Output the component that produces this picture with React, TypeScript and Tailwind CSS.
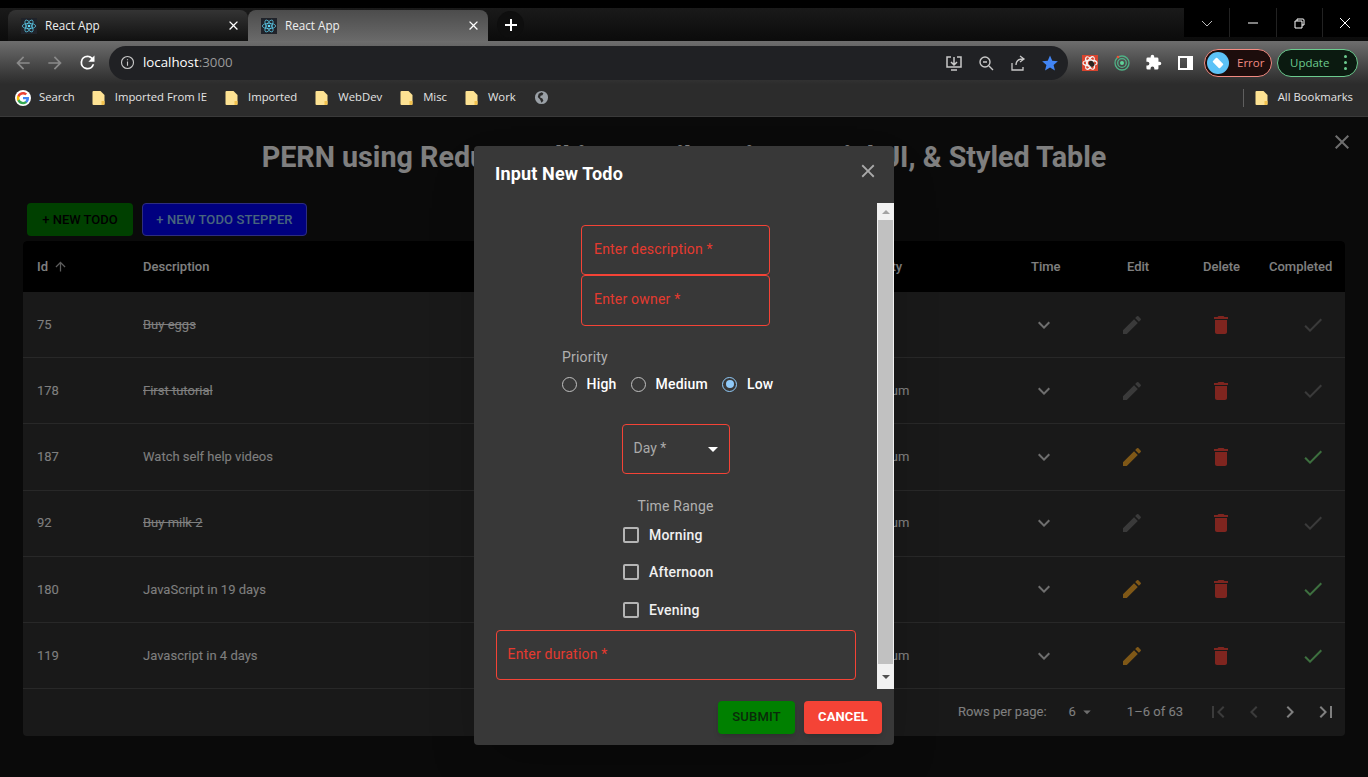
import React from "react";

const P = {
  edit: "M3 17.25V21h3.75L17.81 9.94l-3.75-3.75L3 17.25zM20.71 7.04c.39-.39.39-1.02 0-1.41l-2.34-2.34a.9959.9959 0 0 0-1.41 0l-1.83 1.83 3.75 3.75 1.83-1.83z",
  del: "M6 19c0 1.1.9 2 2 2h8c1.1 0 2-.9 2-2V7H6v12zM19 4h-3.5l-1-1h-5l-1 1H5v2h14V4z",
  check: "M9 16.17 4.83 12l-1.42 1.41L9 19 21 7l-1.41-1.41z",
  more: "M16.59 8.59 12 13.17 7.41 8.59 6 10l6 6 6-6z",
  first: "M18.41 16.59 13.82 12l4.59-4.59L17 6l-6 6 6 6zM6 6h2v12H6z",
  last: "M5.59 7.41 10.18 12l-4.59 4.59L7 18l6-6-6-6zM16 6h2v12h-2z",
  left: "M15.41 16.59 10.83 12l4.58-4.59L14 6l-6 6 6 6z",
  right: "M8.59 16.59 13.17 12 8.59 7.41 10 6l6 6-6 6z",
  drop: "M7 10l5 5 5-5z",
  up: "M4 12l1.41 1.41L11 7.83V20h2V7.83l5.58 5.59L20 12l-8-8-8 8z",
  close: "M19 6.41 17.59 5 12 10.59 6.41 5 5 6.41 10.59 12 5 17.59 6.41 19 12 13.41 17.59 19 19 17.59 13.41 12z",
};

function I({ d, className }: { d: string; className?: string }) {
  return (
    <svg viewBox="0 0 24 24" fill="currentColor" className={className}>
      <path d={d} />
    </svg>
  );
}

function ReactLogo() {
  return (
    <span className="w-4 h-4 bg-[#20232a] flex items-center justify-center shrink-0">
      <svg viewBox="-12 -12 24 24" className="w-4 h-4" fill="none" stroke="#61dafb" strokeWidth="1">
        <circle r="2" fill="#61dafb" stroke="none" />
        <ellipse rx="10" ry="4" />
        <ellipse rx="10" ry="4" transform="rotate(60)" />
        <ellipse rx="10" ry="4" transform="rotate(120)" />
      </svg>
    </span>
  );
}

function Tab({ active }: { active?: boolean }) {
  return (
    <div
      className={`w-[240px] h-[31px] rounded-t-lg flex items-center pl-[13px] pr-[7px] gap-[8px] ${
        active ? "bg-gradient-to-b from-[#4c4c4c] to-[#6a6a6a]" : "bg-gradient-to-b from-[#343434] to-[#111111]"
      }`}
    >
      <ReactLogo />
      <span className="text-[11.7px] text-[#eeeeee] flex-1">React App</span>
      <I d={P.close} className="w-[15px] h-[15px] text-white" />
    </div>
  );
}

function Folder({ label }: { label: string }) {
  return (
    <div className="flex items-center gap-[10px] mr-[18px]">
      <svg viewBox="0 0 12 14" className="w-[13px] h-[14px]">
        <path d="M0 1a1 1 0 0 1 1-1h7l4 4v9a1 1 0 0 1-1 1H1a1 1 0 0 1-1-1z" fill="#fde293" />
        <path d="M9 10h3v3a1 1 0 0 1-1 1H9z" fill="#f2c14e" />
      </svg>
      <span className="text-[11.3px] text-[#e4e4e4]">{label}</span>
    </div>
  );
}

function BrowserChrome() {
  return (
    <div className="font-['Open_Sans','Noto_Sans',sans-serif] shrink-0">
      <div className="h-2 bg-black" />
      <div className="h-[33px] bg-gradient-to-b from-[#1a1a1a] to-[#0b0b0b] flex items-end pl-2 relative">
        <Tab />
        <Tab active />
        <div className="ml-[9px] mb-[3px] w-[27px] h-[27px] rounded-full bg-[#0e0e0e] flex items-center justify-center text-white">
          <svg viewBox="0 0 14 14" className="w-[14px] h-[14px]" stroke="currentColor" strokeWidth="2">
            <path d="M7 1v12M1 7h12" />
          </svg>
        </div>
        <div className="absolute right-0 top-0 h-[29px] w-[184px] bg-black flex text-white">
          {[
            <path key="a" d="M1 4l5 5 5-5" fill="none" stroke="#bbb" />,
            <path key="b" d="M1 6h10" fill="none" stroke="#fff" />,
            <path key="c" d="M2 4h7v7H2zM4 4V2h6a1 1 0 0 1 1 1v5H9" fill="none" stroke="#fff" />,
            <path key="d" d="M1 1l10 10M11 1L1 11" fill="none" stroke="#fff" />,
          ].map((g, i) => (
            <div key={i} className={`flex-1 flex items-center justify-center ${i < 3 ? "border-r border-[#222]" : ""}`}>
              <svg viewBox="0 0 12 12" className="w-3 h-3">{g}</svg>
            </div>
          ))}
        </div>
      </div>
      <div className="h-[43px] bg-gradient-to-b from-[#6e6e6e] to-[#2c2c2c] flex items-center pl-[13px] text-[#8a8a8a]">
        <svg viewBox="0 0 24 24" className="w-5 h-5" fill="currentColor"><path d="M20 11H7.83l5.59-5.59L12 4l-8 8 8 8 1.41-1.41L7.83 13H20z" /></svg>
        <svg viewBox="0 0 24 24" className="w-5 h-5 ml-[12px]" fill="currentColor"><path d="M4 11h12.17l-5.59-5.59L12 4l8 8-8 8-1.41-1.41L16.17 13H4z" /></svg>
        <svg viewBox="0 0 24 24" className="w-[21px] h-[21px] ml-[12px] text-white" fill="currentColor"><path d="M17.65 6.35A7.96 7.96 0 0 0 12 4a8 8 0 1 0 7.73 10h-2.08A6 6 0 1 1 12 6c1.66 0 3.14.69 4.22 1.78L13 11h7V4z" /></svg>
        <div className="ml-[11px] w-[959px] h-[34px] rounded-full bg-[#202124] flex items-center pl-[11px] pr-[9px] text-[#c8c8c8]">
          <svg viewBox="0 0 16 16" className="w-[15px] h-[15px]" fill="none" stroke="currentColor" strokeWidth="1.2">
            <circle cx="8" cy="8" r="6.4" />
            <path d="M8 7v4.4M8 4.4v1.3" />
          </svg>
          <span className="ml-[8px] text-[13.3px] text-white">localhost<span className="text-[#9a9a9a]">:3000</span></span>
          <div className="ml-auto flex items-center gap-[14px]">
            <svg viewBox="0 0 18 18" className="w-[18px] h-[18px]" fill="none" stroke="currentColor" strokeWidth="1.5">
              <path d="M9 3v8M6 8l3 3 3-3M6 3H2v10h14V3h-4M6 16h6" />
            </svg>
            <svg viewBox="0 0 18 18" className="w-[18px] h-[18px]" fill="none" stroke="currentColor" strokeWidth="1.4">
              <circle cx="8" cy="8" r="5" />
              <path d="M6 8h4M12 12l4 4" />
            </svg>
            <svg viewBox="0 0 18 18" className="w-[18px] h-[18px]" fill="none" stroke="currentColor" strokeWidth="1.3">
              <path d="M3 9v7h11v-3M7 11c0-4 3-6 7-6M11 2l4 3-4 3" />
            </svg>
            <svg viewBox="0 0 24 24" className="w-[18px] h-[18px]" fill="#4285f4">
              <path d="M12 2l3 7 7.5.6-5.700 4.900 1.800 7.500L12 18l-6.600 4 1.800-7.500L1.500 9.600 9 9z" />
            </svg>
          </div>
        </div>
        <div className="ml-[14px] w-4 h-4 bg-[#d9452f] flex items-center justify-center">
          <svg viewBox="-8 -8 16 16" className="w-4 h-4" fill="none" stroke="#f5f5f5" strokeWidth="1.2">
            <ellipse rx="7" ry="2.800" />
            <ellipse rx="7" ry="2.800" transform="rotate(60)" />
            <ellipse rx="7" ry="2.800" transform="rotate(120)" />
            <ellipse cx="1" cy="1.500" rx="2.500" ry="3.200" fill="#2a2320" stroke="none" transform="rotate(-30)" />
          </svg>
        </div>
        <svg viewBox="0 0 16 16" className="w-4 h-4 ml-4" fill="none">
          <circle cx="8" cy="8" r="7" stroke="#4fb286" strokeWidth="1.3" />
          <circle cx="8" cy="8" r="4.3" stroke="#4fb286" strokeWidth="1.3" />
          <circle cx="8" cy="8" r="2" fill="#5fd39a" />
          <circle cx="4" cy="2" r="1.3" fill="#e8553a" />
        </svg>
        <svg viewBox="0 0 24 24" className="w-[17px] h-[17px] ml-[15px]" fill="#fff">
          <path d="M20.5 11H19V7a2 2 0 0 0-2-2h-4V3.5a2.5 2.5 0 0 0-5 0V5H4a2 2 0 0 0-2 2v3.8h1.5a2.7 2.7 0 0 1 0 5.4H2V20a2 2 0 0 0 2 2h3.8v-1.5a2.7 2.7 0 0 1 5.4 0V22H17a2 2 0 0 0 2-2v-4h1.5a2.5 2.5 0 0 0 0-5z" />
        </svg>
        <div className="ml-[16px] w-[15px] h-[14px] border-2 border-white border-r-[6px]" />
        <div className="ml-[11px] w-[68px] h-[28px] rounded-full border border-[#f28b82] bg-[#1d0d0c] flex items-center pl-[2px] gap-[8px]">
          <div className="w-[22px] h-[22px] rounded-full bg-[#5cc2f7] flex items-center justify-center">
            <div className="w-[10px] h-[6px] bg-white rotate-45 rounded-[1px]" />
          </div>
          <span className="text-[11.5px] text-[#f28b82]">Error</span>
        </div>
        <div className="ml-[5px] w-[81px] h-[28px] rounded-full border border-[#6ccb8f] bg-[#0b1a10] flex items-center pl-[12px] pr-[10px] justify-between">
          <span className="text-[11.5px] text-[#6ccb8f]">Update</span>
          <div className="flex flex-col gap-[3px]">
            <div className="w-[3px] h-[3px] rounded-full bg-[#6ccb8f]" />
            <div className="w-[3px] h-[3px] rounded-full bg-[#6ccb8f]" />
            <div className="w-[3px] h-[3px] rounded-full bg-[#6ccb8f]" />
          </div>
        </div>
      </div>
      <div className="h-[33px] bg-[#2c2c2c] border-b border-[#3a3a3a] flex items-center pl-[15px] pr-[15px] pb-[5px]">
        <svg viewBox="0 0 48 48" className="w-4 h-4 mr-2">
          <circle cx="24" cy="24" r="24" fill="#fff" />
          <path fill="#4285f4" d="M42 24.5c0-1.300-.1-2.500-.3-3.700H24v7h10.100c-.4 2.300-1.800 4.300-3.700 5.600v4.600h6c3.500-3.200 5.600-8 5.600-13.500z" />
          <path fill="#34a853" d="M24 43c5 0 9.200-1.700 12.300-4.500l-6-4.600c-1.700 1.100-3.800 1.800-6.300 1.800-4.900 0-9-3.300-10.400-7.700H7.400v4.800C10.500 38.200 16.800 43 24 43z" />
          <path fill="#fbbc05" d="M13.600 28c-.4-1.100-.6-2.300-.6-3.500s.2-2.400.6-3.500v-4.800H7.400C6.100 18.800 5.500 21.600 5.500 24.500s.6 5.700 1.900 8.300z" />
          <path fill="#ea4335" d="M24 13.300c2.700 0 5.200.9 7.100 2.800l5.300-5.300C33.200 7.800 29 6 24 6 16.800 6 10.500 10.800 7.400 16.200l6.200 4.800C15 16.600 19.100 13.300 24 13.300z" />
        </svg>
        <span className="text-[11.3px] text-[#e4e4e4] mr-[17px]">Search</span>
        <Folder label="Imported From IE" />
        <Folder label="Imported" />
        <Folder label="WebDev" />
        <Folder label="Misc" />
        <Folder label="Work" />
        <svg viewBox="0 0 16 16" className="w-[15px] h-[15px]" fill="#9aa0a6">
          <path fillRule="evenodd" d="M8 1a7 7 0 1 0 0 14A7 7 0 0 0 8 1zM5 4l3-1.500 2 1-1 2-2 .5-.5 2 2.500 1 1 2.500-2 2-1.500-3.500-2.500-2.500z" />
        </svg>
        <div className="ml-auto w-px h-[18px] bg-[#5f5f5f] mr-[11px]" />
        <Folder label="" />
        <span className="text-[11.3px] text-[#e4e4e4] -ml-[18px]">All Bookmarks</span>
      </div>
    </div>
  );
}

const rows = [
  { id: 75, d: "Buy eggs", p: "Low", done: true },
  { id: 178, d: "First tutorial", p: "Medium", done: true },
  { id: 187, d: "Watch self help videos", p: "Medium", done: false },
  { id: 92, d: "Buy milk 2", p: "Medium", done: true },
  { id: 180, d: "JavaScript in 19 days", p: "Low", done: false },
  { id: 119, d: "Javascript in 4 days", p: "Medium", done: false },
];

const cols = "grid grid-cols-[106px_717px_171px_96px_76px_66px_90px] items-center";

function Page() {
  return (
    <div className="flex-1 bg-[#141414] relative font-['Roboto',sans-serif] overflow-hidden">
      <h1 className="text-center text-[28.7px] font-bold text-white leading-[36px] pt-[22px]">
        PERN using Redux Toolkit, Formik, Joi, Material UI, &amp; Styled Table
      </h1>
      <div className="flex gap-[9px] pl-[27px] mt-[28px]">
        <div className="w-[106px] h-[33px] rounded bg-[#008000] text-black text-[13px] font-medium flex items-center justify-center">+ NEW TODO</div>
        <div className="w-[165px] h-[33px] rounded bg-[#0000ff] border border-[#5a5aff] text-[#90caf9] text-[13px] tracking-[0.13px] font-medium flex items-center justify-center">+ NEW TODO STEPPER</div>
      </div>
      <div className="mx-[23px] mt-[5px] rounded overflow-hidden bg-[#333333]">
        <div className={`${cols} h-[51px] bg-black text-white text-[13px] font-medium`}>
          <div className="pl-[14px] flex items-center gap-[5px]">Id <I d={P.up} className="w-[15px] h-[15px] text-[#bbbbbb]" /></div>
          <div className="pl-[14px]">Description</div>
          <div className="pl-[14px]">Priority</div>
          <div className="pl-[14px]">Time</div>
          <div className="pl-[14px]">Edit</div>
          <div className="pl-[14px]">Delete</div>
          <div className="pl-[14px]">Completed</div>
        </div>
        {rows.map((r) => (
          <div key={r.id} className={`${cols} h-[66.2px] border-b border-[#515151] text-[13px] text-white`}>
            <div className="pl-[14px]">{r.id}</div>
            <div className={`pl-[14px] ${r.done ? "line-through" : ""}`}>{r.d}</div>
            <div className="pl-[16px]">{r.p}</div>
            <div className="pl-[15px]"><I d={P.more} className="w-6 h-6 text-[#dddddd]" /></div>
            <div className="pl-[7px]"><I d={P.edit} className={`w-6 h-6 ${r.done ? "text-[#757575]" : "text-[#ffb02e]"}`} /></div>
            <div className="pl-[20px]"><I d={P.del} className="w-6 h-6 text-[#ff4a3f]" /></div>
            <div className="pl-[46px]"><I d={P.check} className={`w-6 h-6 ${r.done ? "text-[#757575]" : "text-[#7adf7e]"}`} /></div>
          </div>
        ))}
        <div className="h-[47px] flex items-center text-[13px] text-white pr-[7px] pb-[1px] justify-end">
          <span>Rows per page:</span>
          <span className="ml-[22px]">6</span>
          <I d={P.drop} className="w-[18px] h-[18px] ml-[2px] text-[#dddddd]" />
          <span className="ml-[31px]">1–6 of 63</span>
          <div className="ml-[23px] flex gap-[12px]">
            <I d={P.first} className="w-6 h-6 text-[#777777]" />
            <I d={P.left} className="w-6 h-6 text-[#777777]" />
            <I d={P.right} className="w-6 h-6 text-white" />
            <I d={P.last} className="w-6 h-6 text-white" />
          </div>
        </div>
      </div>
      <I d={P.close} className="absolute right-[14px] top-[13px] w-6 h-6 text-[#dddddd]" />
      <div className="absolute inset-0 bg-black/50" />
      <Dialog />
    </div>
  );
}

function OutlineField({ label, className }: { label: string; className: string }) {
  return (
    <div className={`border border-[#f44336] rounded flex items-center text-sm tracking-[0.2px] text-[#e53a2f] ${className}`}>
      {label} *
    </div>
  );
}

function Radio({ label, on }: { label: string; on?: boolean }) {
  return (
    <div className="flex items-center gap-[9.5px]">
      <div className={`w-[15px] h-[15px] rounded-full border-[1.5px] flex items-center justify-center ${on ? "border-[#90caf9]" : "border-[#c0c0c0]"}`}>
        {on && <div className="w-[8px] h-[8px] rounded-full bg-[#90caf9]" />}
      </div>
      <span className="text-sm font-medium tracking-[0.2px] text-white">{label}</span>
    </div>
  );
}

function Check({ label, className }: { label: string; className?: string }) {
  return (
    <div className={`flex items-center gap-[10px] ${className ?? ""}`}>
      <div className="w-[16px] h-[16px] rounded-[2px] border-2 border-[#b5b5b5]" />
      <span className="text-sm font-medium tracking-[0.2px] text-[#f0f0f0]">{label}</span>
    </div>
  );
}

function Dialog() {
  return (
    <div className="absolute left-[474px] top-[29px] w-[420px] h-[599px] rounded bg-[#383838] shadow-2xl flex flex-col">
      <div className="h-[57px] flex items-center justify-between pl-[21px] pr-[15px] pt-[1px]">
        <span className="text-[18px] font-bold tracking-[0.15px] text-white relative -top-[2px]">Input New Todo</span>
        <I d={P.close} className="w-[22px] h-[22px] text-[#aaaaaa] relative -top-[4px]" />
      </div>
      <div className="h-[486px] flex">
        <div className="flex-1 flex flex-col items-center pt-[22px]">
          <OutlineField label="Enter description" className="w-[189px] h-[50px] pl-[12px] pb-[2px]" />
          <OutlineField label="Enter owner" className="w-[189px] h-[51px] pl-[12px] pb-[3px]" />
          <div className="mt-[22px] mr-[14px] w-[213px] text-sm tracking-[0.2px] text-[#b0b0b0] leading-[18px]">Priority</div>
          <div className="mt-[8px] mr-[14px] w-[213px] flex gap-[14.5px]">
            <Radio label="High" />
            <Radio label="Medium" />
            <Radio label="Low" on />
          </div>
          <div className="mt-[30px] w-[108px] h-[50px] border border-[#f44336] rounded flex items-center pl-[11px] pr-[4px] text-sm text-[#aaaaaa] justify-between">
            <span className="relative -top-[1px]">Day *</span>
            <I d={P.drop} className="w-[24px] h-[24px] text-white" />
          </div>
          <div className="mt-[23px] text-sm tracking-[0.2px] text-[#b0b0b0] leading-[18px]">Time Range</div>
          <div className="mt-[10px] w-[105px] flex flex-col">
            <Check label="Morning" />
            <Check label="Afternoon" className="mt-[17px]" />
            <Check label="Evening" className="mt-[18px]" />
          </div>
          <OutlineField label="Enter duration" className="w-[360px] h-[50px] mt-[10px] pl-[11px] pb-[2px]" />
        </div>
        <div className="w-[17px] bg-[#f1f1f1] flex flex-col items-center shrink-0">
          <div className="h-[17px] flex items-center justify-center">
            <div className="border-x-[4px] border-x-transparent border-b-[4px] border-b-[#a3a3a3]" />
          </div>
          <div className="w-[15px] h-[444px] bg-[#c1c1c1]" />
          <div className="flex-1 flex items-center justify-center">
            <div className="border-x-[4px] border-x-transparent border-t-[4px] border-t-[#505050]" />
          </div>
        </div>
      </div>
      <div className="flex-1 flex items-start justify-end pt-[12px] pr-[12px] gap-[9px]">
        <div className="w-[77px] h-[33px] pb-[1px] rounded bg-[#008000] text-[#0a2a0a] text-[13px] tracking-[0.2px] font-medium flex items-center justify-center shadow-md">SUBMIT</div>
        <div className="w-[78px] h-[33px] pb-[1px] rounded bg-[#f44336] text-white text-[13px] tracking-[0.1px] font-bold flex items-center justify-center shadow-md">CANCEL</div>
      </div>
    </div>
  );
}

export default function App() {
  return (
    <div className="w-[1368px] h-[777px] flex flex-col overflow-hidden bg-black">
      <BrowserChrome />
      <Page />
    </div>
  );
}
